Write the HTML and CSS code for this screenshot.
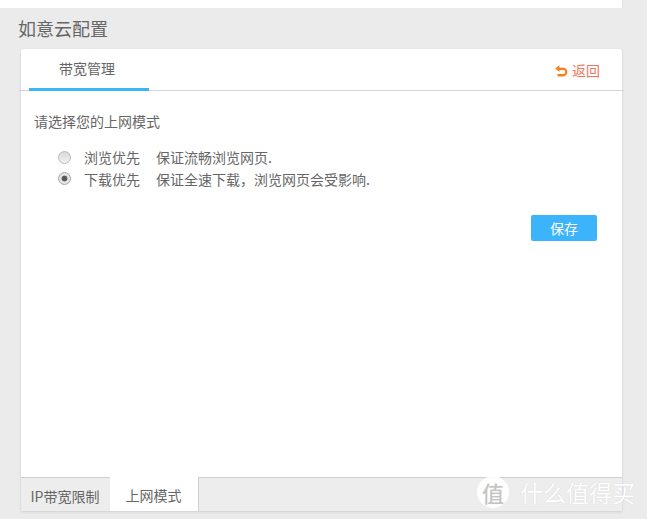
FILE: index.html
```html
<!DOCTYPE html>
<html lang="zh-CN">
<head>
  <meta charset="UTF-8">
  <title>如意云配置</title>
  <link rel="stylesheet" href="styles.css">
</head>
<body>
  <div class="top-strip"></div>
  <h1 class="page-title">如意云配置</h1>

  <div class="card">
    <div class="card__head">
      <span class="head-tab">带宽管理</span>
      <a class="back-link">
        <svg class="back-icon" width="14" height="14" viewBox="0 0 14 14">
          <path d="M5.5 1.2 1.2 4.6 5.5 8V5.9H9.2C10.6 5.9 11.2 6.8 11.2 7.9 11.2 9.2 10.4 10 9.2 10H3.6V12.4H9.4C11.6 12.4 13.4 10.6 13.4 8 13.4 5.4 11.6 3.7 9.4 3.7H5.5Z" fill="#fa7f16"/>
        </svg>
        返回
      </a>
    </div>

    <div class="card__body">
      <p class="prompt">请选择您的上网模式</p>
      <ul class="modes">
        <li class="mode">
          <span class="radio"></span>
          <span class="mode__name">浏览优先</span>
          <span>保证流畅浏览网页.</span>
        </li>
        <li class="mode">
          <span class="radio radio--on"></span>
          <span class="mode__name">下载优先</span>
          <span>保证全速下载，浏览网页会受影响.</span>
        </li>
      </ul>
      <div class="actions">
        <button class="save-btn">保存</button>
      </div>
    </div>

    <div class="card__foot">
      <span class="foot-tab">IP带宽限制</span>
      <span class="foot-tab foot-tab--on">上网模式</span>
    </div>
  </div>

  <!-- 水印 -->
  <div class="watermark">
    <span class="watermark__logo">值</span>
    <span class="watermark__text">什么值得买</span>
  </div>
</body>
</html>
```

FILE: styles.css
```css
html, body {
  margin: 0;
  padding: 0;
  height: 100%;
  overflow: hidden;
}

body {
  position: relative;
  background: #ebebeb;
  color: #666;
  font-family: "Noto Sans CJK SC", "Liberation Sans", sans-serif;
  font-size: 14px;
}

.top-strip {
  width: 622px;
  height: 8px;
  background: #fff;
  border-right: 1px solid #e2e2e2;
}

.page-title {
  margin: 0;
  height: 41px;
  padding-left: 18px;
  font-size: 18px;
  font-weight: 400;
  line-height: 41px;
  color: #666;
}

/* === CARTE === */
.card {
  display: flex;
  flex-direction: column;
  width: 601px;
  height: 462px;
  margin-left: 21px;
  background: #fff;
  border-radius: 3px 3px 0 0;
  box-shadow: 0 1px 3px rgba(0, 0, 0, 0.12);
}

.card__head {
  display: flex;
  justify-content: space-between;
  align-items: flex-start;
  height: 41px;
  margin: 0 -2px;
  padding: 0 24px 0 10px;
  border-bottom: 1px solid #d4d4d4;
}

.head-tab {
  box-sizing: border-box;
  width: 120px;
  height: 42px;
  padding-right: 4px;
  border-bottom: 3px solid #3cb4fb;
  line-height: 39px;
  text-align: center;
  color: #666;
}

.back-link {
  display: flex;
  align-items: center;
  gap: 4px;
  height: 42px;
  color: #f7735a;
}

.back-icon {
  margin-top: 2px;
}

.card__body {
  flex: 1;
  padding: 0 25px 0 13px;
}

.prompt {
  margin: 21px 0 0;
  line-height: 18px;
}

.modes {
  margin: 16px 0 0;
  padding: 0 0 0 24px;
  list-style: none;
}

.mode {
  display: flex;
  align-items: center;
  height: 22px;
}

.mode__name {
  margin-right: 16px;
}

.radio {
  box-sizing: border-box;
  width: 13px;
  height: 13px;
  margin-right: 13px;
  border: 1px solid #b9b9b9;
  border-radius: 50%;
  background: linear-gradient(#d8d8d8, #f2f2f2);
}

.radio--on {
  margin-bottom: 2px;
  border-color: #a8a8a8;
  background: radial-gradient(circle, #5a5a5a 0 2.5px, #e4e4e4 3.3px);
}

.actions {
  display: flex;
  justify-content: flex-end;
  margin-top: 25px;
}

.save-btn {
  width: 66px;
  height: 26px;
  padding: 0;
  border: 0;
  border-radius: 2px;
  background: #3cb4fb;
  color: #fff;
  font: inherit;
  font-size: 14px;
}

/* === ONGLETS DU BAS === */
.card__foot {
  display: flex;
  height: 33px;
  border-top: 1px solid #cfcfcf;
  background: #ededed;
}

.foot-tab {
  box-sizing: border-box;
  width: 89px;
  padding-right: 1px;
  line-height: 36px;
  text-align: center;
  color: #666;
}

.foot-tab--on {
  width: 89px;
  height: 34px;
  margin-top: -1px;
  background: #fff;
  border-right: 1px solid #cfcfcf;
}

/* === FILIGRANE === */
.watermark {
  position: absolute;
  left: 477px;
  top: 476px;
  display: flex;
  align-items: center;
  gap: 11px;
  color: #fff;
  text-shadow: 0 0 1px rgba(0, 0, 0, 0.15);
}

.watermark__logo {
  width: 32px;
  height: 32px;
  border-radius: 50%;
  background: rgba(255, 255, 255, 0.9);
  color: #c4c4c4;
  font-size: 22px;
  line-height: 32px;
  text-align: center;
}

.watermark__text {
  font-size: 23px;
  line-height: 32px;
}
```
